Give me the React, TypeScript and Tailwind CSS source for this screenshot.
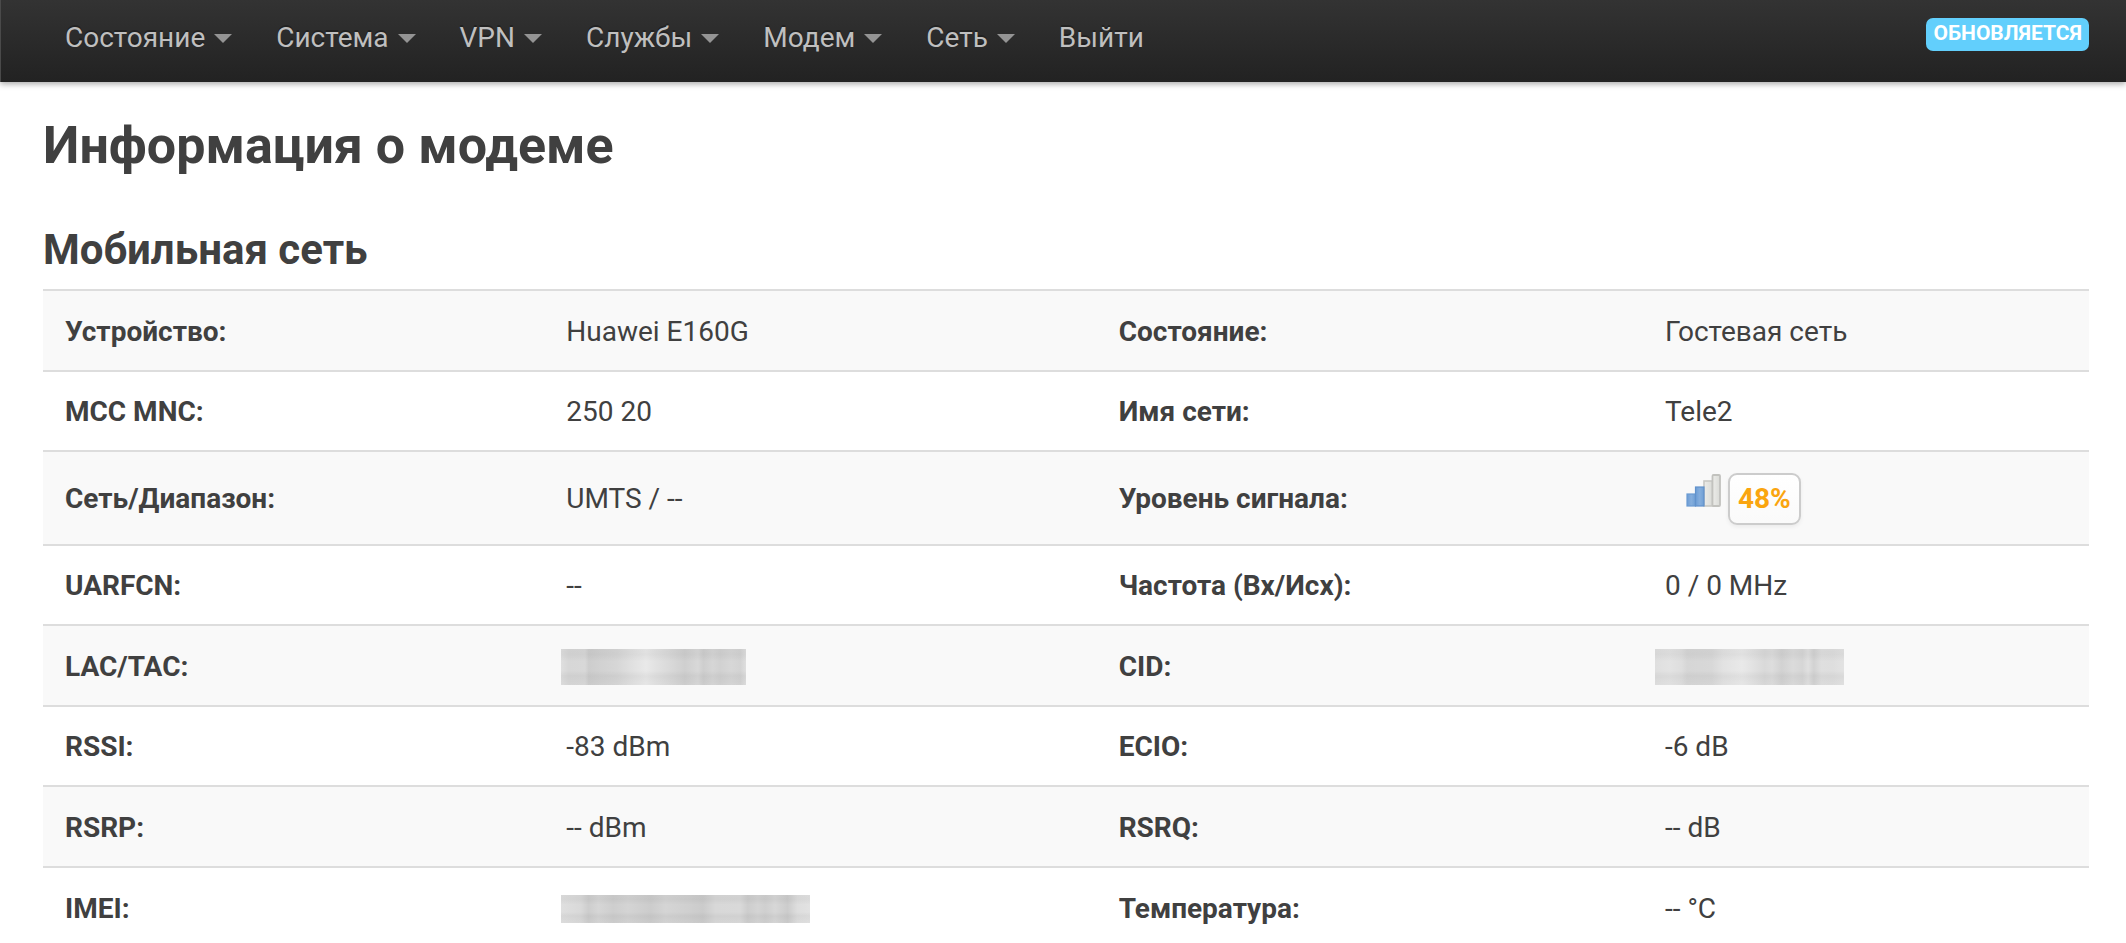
import React from "react";

type NavItem = { label: string; menu: boolean };

const navItems: NavItem[] = [
  { label: "Состояние", menu: true },
  { label: "Система", menu: true },
  { label: "VPN", menu: true },
  { label: "Службы", menu: true },
  { label: "Модем", menu: true },
  { label: "Сеть", menu: true },
  { label: "Выйти", menu: false },
];

function Caret() {
  return (
    <svg className="h-[9px] w-[18px]" viewBox="0 0 18 9" aria-hidden="true">
      <path d="M0 0H18L9 9Z" fill="#949494" />
    </svg>
  );
}

function SignalIcon() {
  return (
    <svg className="h-[35px] w-[35px]" viewBox="0 0 35 35" role="img" aria-label="Сигнал 48%">
      <defs>
        <linearGradient id="bar-on" x1="0" y1="0" x2="1" y2="0">
          <stop offset="0" stopColor="#6c9dd5" />
          <stop offset="0.5" stopColor="#85aedd" />
          <stop offset="1" stopColor="#6f9fd4" />
        </linearGradient>
        <linearGradient id="bar-off" x1="0" y1="0" x2="1" y2="0">
          <stop offset="0" stopColor="#ecece9" />
          <stop offset="1" stopColor="#dadbd7" />
        </linearGradient>
        <filter id="soft" x="-10%" y="-10%" width="120%" height="120%">
          <feGaussianBlur stdDeviation="0.7" />
        </filter>
      </defs>
      <g filter="url(#soft)">
        <rect x="18" y="8" width="8.5" height="25" fill="url(#bar-off)" stroke="#c8c8c4" strokeWidth="1.6" />
        <rect x="26.5" y="2" width="7.5" height="31" rx="1" fill="url(#bar-off)" stroke="#c2c2be" strokeWidth="1.8" />
        <rect x="1" y="21" width="8.5" height="12" fill="url(#bar-on)" stroke="#6b9bd2" strokeWidth="1.2" />
        <rect x="9.5" y="14" width="8.5" height="19" fill="url(#bar-on)" stroke="#6292cb" strokeWidth="1.2" />
      </g>
    </svg>
  );
}

function SignalLevel() {
  return (
    <div className="flex items-start gap-[7px] pl-[21px]">
      <SignalIcon />
      <span className="rounded-[9px] border-2 border-[#ccc] bg-linear-to-b from-white to-[#fafafa] px-2 py-1 leading-10 font-bold text-[#faa50f] shadow-[0_2px_4px_rgba(0,0,0,0.06)]">
        48%
      </span>
    </div>
  );
}

const lacMask =
  "h-9 w-[185px] -ml-[5px] bg-[linear-gradient(to_right,#dfdfdf_0%,#d7d7d7_4%,#d8d8d8_13%,#cdcdcd_15%,#d2d2d2_22%,#d6d6d6_30%,#e0e0e0_38%,#e9e9e9_46%,#e2e2e2_51%,#d9d9d9_59%,#cfcfcf_67%,#d8d8d8_74%,#cecece_77%,#d6d6d6_82%,#d1d1d1_86%,#d7d7d7_92%,#d3d3d3_97%,#dfdfdf_100%)]";
const cidMask =
  "h-9 w-[189px] -ml-[10px] bg-[linear-gradient(to_right,#dfdfdf_0%,#e3e3e3_8%,#dedede_14%,#d6d6d6_17%,#d8d8d8_30%,#e2e2e2_36%,#e9e9e9_46%,#e3e3e3_51%,#d9d9d9_58%,#dddddd_62%,#d2d2d2_67%,#dbdbdb_73%,#d6d6d6_78%,#e0e0e0_81%,#d2d2d2_84%,#dfdfdf_88%,#dedede_94%,#e3e3e3_100%)]";
const imeiMask =
  "h-7 w-[249px] -ml-[5px] bg-[linear-gradient(to_right,#dfdfdf_0%,#d9d9d9_8%,#cdcdcd_11%,#d6d6d6_15%,#cecece_21%,#d4d4d4_27%,#cccccc_36%,#d5d5d5_42%,#cfcfcf_52%,#cbcbcb_57%,#d8d8d8_62%,#d9d9d9_72%,#cdcdcd_75%,#d4d4d4_79%,#cfcfcf_82%,#d7d7d7_86%,#cccccc_91%,#dedede_95%,#e2e2e2_100%)]";

type Cell = { label: string; value: React.ReactNode };

function Masked({ className }: { className: string }) {
  return (
    <div className={className}>
      <div className="h-full bg-[linear-gradient(to_bottom,rgba(0,0,0,0.03)_0%,rgba(0,0,0,0.04)_15%,transparent_35%,transparent_60%,rgba(0,0,0,0.04)_75%,rgba(0,0,0,0.01)_100%)]" />
    </div>
  );
}

const rows: [Cell, Cell][] = [
  [{ label: "Устройство:", value: "Huawei E160G" }, { label: "Состояние:", value: "Гостевая сеть" }],
  [{ label: "MCC MNC:", value: "250 20" }, { label: "Имя сети:", value: "Tele2" }],
  [{ label: "Сеть/Диапазон:", value: "UMTS / --" }, { label: "Уровень сигнала:", value: <SignalLevel /> }],
  [{ label: "UARFCN:", value: "--" }, { label: "Частота (Вх/Исх):", value: "0 / 0 MHz" }],
  [{ label: "LAC/TAC:", value: <Masked className={lacMask} /> }, { label: "CID:", value: <Masked className={cidMask} /> }],
  [{ label: "RSSI:", value: "-83 dBm" }, { label: "ECIO:", value: "-6 dB" }],
  [{ label: "RSRP:", value: "-- dBm" }, { label: "RSRQ:", value: "-- dB" }],
  [{ label: "IMEI:", value: <Masked className={imeiMask} /> }, { label: "Температура:", value: "-- °C" }],
];

export default function App() {
  return (
    <div className="bg-white font-['Roboto',sans-serif] text-[28px] leading-[38px] text-[#404040]">
      <header className="flex h-[82px] items-start justify-between border-l border-[#4a4a4a] bg-linear-to-b from-[#333] to-[#222] pr-[37px] pl-[42px] shadow-[0_2px_6px_rgba(0,0,0,0.35)]">
        <nav>
          <ul className="flex">
            {navItems.map((item) => (
              <li key={item.label}>
                <a
                  href="#"
                  className="flex items-center gap-[9px] px-[22px] py-[19px] text-[#bfbfbf] [text-shadow:0_-2px_0_rgba(0,0,0,0.25)]"
                >
                  {item.label}
                  {item.menu && <Caret />}
                </a>
              </li>
            ))}
          </ul>
        </nav>
        <button
          type="button"
          className="mt-[18px] rounded-[7px] bg-[#62cffc] px-[7px] pt-[3px] pb-[5px] text-[21px] leading-[25px] font-bold text-white uppercase"
        >
          Обновляется
        </button>
      </header>

      <main className="pt-[25px] pr-[37px] pl-[43px]">
        <h1 className="text-[52px] leading-[78px] font-bold">Информация о модеме</h1>
        <h2 className="mt-[25px] text-[42px] leading-[79px] font-bold">Мобильная сеть</h2>
        <table className="w-full table-fixed border-collapse">
          <colgroup>
            <col className="w-[24.5%]" />
            <col className="w-[27%]" />
            <col className="w-[26.7%]" />
            <col className="w-[21.8%]" />
          </colgroup>
          <tbody>
            {rows.map((row) => (
              <tr key={row[0].label} className="border-t-2 border-[#ddd] odd:h-[81px] odd:bg-[#f9f9f9] even:h-20">
                {row.map((cell) => (
                  <React.Fragment key={cell.label}>
                    <th scope="row" className="px-[22px] pt-[21px] pb-[19px] text-left font-bold">
                      {cell.label}
                    </th>
                    <td className="px-[22px] pt-[21px] pb-[19px]">{cell.value}</td>
                  </React.Fragment>
                ))}
              </tr>
            ))}
          </tbody>
        </table>
      </main>
    </div>
  );
}
